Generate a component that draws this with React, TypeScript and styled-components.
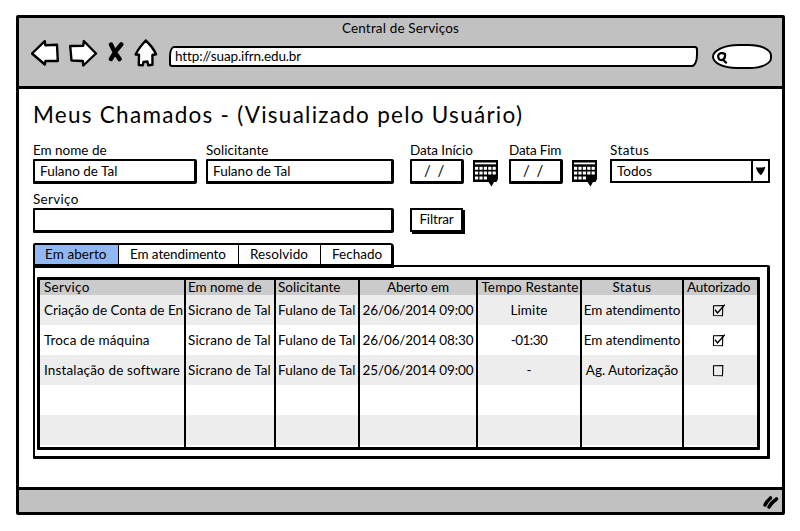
import React from "react";
import styled, { createGlobalStyle } from "styled-components";

const GlobalStyle = createGlobalStyle`
  * { box-sizing: border-box; }
  body { margin: 0; background: #fff; color: #000; font: 13.5px/16px Lato, sans-serif; }
`;

const ink = "#000";

const Text = styled.span<{ $track?: number }>`
  white-space: nowrap;
  letter-spacing: ${(p) => (p.$track ?? 0.1) - 0.05}px;
`;

const Page = styled.main`
  padding: 15px 15px 16px 16px;
  height: 531px;
`;

const BrowserWindow = styled.section`
  display: flex;
  flex-direction: column;
  height: 500px;
  border: 3px solid ${ink};
  border-radius: 2px;
`;

const Chrome = styled.header`
  height: 71px;
  background: #c1c1c1;
  border-bottom: 3px solid ${ink};
`;

const WindowTitle = styled.div`
  height: 20px;
  padding-top: 2px;
  text-align: center;
`;

const Toolbar = styled.div`
  display: flex;
  align-items: center;
  height: 34px;
  padding: 0 10px 0 12px;
`;

const NavIcons = styled.div`
  display: flex;
  gap: 9.5px;
  width: 138px;
  margin-top: -5px;
`;

const AddressBar = styled.div`
  flex: 0 0 529px;
  height: 21px;
  margin-top: 3px;
  padding-left: 4px;
  line-height: 16px;
  background: #fff;
  border: 2px solid ${ink};
  border-radius: 5px 3px 6px 3px / 10px 4px 12px 3px;
`;

const SearchBox = styled.div`
  display: flex;
  align-items: center;
  width: 60px;
  height: 25px;
  margin: 2px 0 0 14px;
  padding: 3px 0 0 2px;
  background: #fff;
  border: 2.5px solid ${ink};
  border-radius: 45% 40% 38% 42% / 52% 46% 44% 50%;
`;

const Content = styled.div`
  flex: 1;
  padding: 0 12px 0 14px;
`;

const Heading = styled.h1`
  margin: 0;
  padding-top: 10px;
  height: 53px;
  font: 400 22.5px/32px Lato, sans-serif;
  letter-spacing: 1.27px;
  white-space: nowrap;
`;

const Filters = styled.div`
  display: grid;
  grid-template-columns: 173px 204px 99px 101px 160px;
  height: 49px;
`;

const Field = styled.div`
  display: flex;
  flex-direction: column;
`;

const Label = styled.label`
  height: 17px;
`;

const Input = styled.div<{ $w: number }>`
  width: ${(p) => p.$w}px;
  height: 25px;
  padding-left: 5px;
  line-height: 20px;
  background: #fff;
  border: solid ${ink};
  border-width: 2px 3px 3px 2px;
  border-radius: 1px 2px 2px 1px;
`;

const DateGroup = styled.div`
  display: flex;
  gap: 9px;
`;

const DateInput = styled(Input)`
  padding-left: 12px;
  line-height: 18px;
  white-space: pre;
  font-size: 15px;
  word-spacing: 3px;
`;

const Select = styled.div`
  display: flex;
  width: 160px;
  height: 24px;
  line-height: 20px;
  border: 2px solid ${ink};
`;

const SelectValue = styled.div`
  flex: 1;
  padding-left: 5px;
`;

const SelectArrow = styled.div`
  display: flex;
  align-items: center;
  justify-content: center;
  width: 17px;
  border-left: 2px solid ${ink};
`;

const ServiceRow = styled.div`
  display: flex;
  align-items: flex-end;
  gap: 16px;
  height: 42px;
`;

const Button = styled.button`
  width: 53px;
  height: 24px;
  margin-bottom: 1px;
  padding: 0 0 2px;
  font: inherit;
  color: inherit;
  background: #fff;
  border: 2px solid ${ink};
  box-shadow: 2px 2px 0 ${ink};
`;

const Tabs = styled.div`
  display: flex;
  width: 361px;
  height: 25px;
  margin-top: 10px;
  border: solid ${ink};
  border-width: 2px 3px 4px 2px;
  border-radius: 2px 4px 0 0;
`;

const Tab = styled.div<{ $w: number; $active?: boolean }>`
  width: ${(p) => p.$w}px;
  padding-left: 10px;
  line-height: 19px;
  background: ${(p) => (p.$active ? "#92b8f1" : "#fff")};
  & + & {
    padding-left: 11px;
    border-left: 1.5px solid ${ink};
  }
`;

const Panel = styled.div`
  height: 194px;
  margin-top: -3px;
  padding: 10px 7px 6px 2px;
  border: solid ${ink};
  border-width: 2px 3px 3px 2px;
  border-radius: 0 2px 1px 1px;
`;

const Table = styled.div`
  height: 173px;
  border: 3px solid ${ink};
  border-radius: 1px;
`;

const columns = "146px 90px 84px 118px 104px 102px 73px";

const Row = styled.div<{ $kind: "head" | "odd" | "even" | "tail" }>`
  display: grid;
  grid-template-columns: ${columns};
  height: ${(p) => (p.$kind === "head" ? 15 : p.$kind === "tail" ? 2 : 30)}px;
  line-height: ${(p) => (p.$kind === "head" ? 15 : 30)}px;
  background: ${(p) => ({ head: "#cbcbcb", odd: "#ededed", even: "#fff", tail: "#fff" })[p.$kind]};
`;

const Cell = styled.div<{ $center?: boolean; $indent?: number }>`
  overflow: hidden;
  display: flex;
  align-items: center;
  justify-content: ${(p) => (p.$center ? "center" : "flex-start")};
  padding-left: ${(p) => p.$indent ?? 0}px;
  border-right: 2px solid ${ink};
  &:last-child {
    border-right: 0;
    padding-right: 4px;
  }
`;

const StatusBar = styled.footer`
  display: flex;
  align-items: center;
  justify-content: flex-end;
  height: 25px;
  padding: 2px 2px 0 0;
  background: #c1c1c1;
  border-top: 3px solid ${ink};
`;

const BackIcon = () => (
  <svg width="28" height="28" viewBox="0 0 28 28">
    <path d="M1 14.5 13.8 2.2 14.3 6.2 26 5.7 26.8 22 14.5 22 13.8 25.5Z" fill="#fff" stroke={ink} strokeWidth="2.4" strokeLinejoin="round" />
  </svg>
);
const ForwardIcon = () => (
  <svg width="29" height="28" viewBox="0 0 29 28">
    <path d="M27 14.5 14.8 2 14.3 6.7 1.2 7 2.5 21.5 13.8 22 14.3 26.5Z" fill="#fff" stroke={ink} strokeWidth="2.4" strokeLinejoin="round" />
  </svg>
);
const StopIcon = () => (
  <svg width="17" height="28" viewBox="0 0 17 28">
    <path d="M4 5.500Q7.500 14 12.500 20M14.200 5.500Q8 12 4 20" fill="none" stroke={ink} strokeWidth="4.5" strokeLinecap="round" />
  </svg>
);
const HomeIcon = () => (
  <svg width="24" height="28" viewBox="0 0 24 28">
    <path d="M11.7 1.5C8.5 5 4 10 1.7 15.5L5 15.8 4.8 26 8.8 26.3 9.5 23 13.4 22.5 14.2 26.3 18.5 25.8 18.4 16 22 15.3C20 10.5 15.5 5 11.7 1.5Z" fill="#fff" stroke={ink} strokeWidth="2.4" strokeLinejoin="round" />
  </svg>
);
const SearchIcon = () => (
  <svg width="12" height="12" viewBox="0 0 12 12">
    <path d="M9 2Q4-.5 2.2 3.5 2 8 5.500 8.200 9.500 7.500 9 2ZM7 7.800 10 10.600" fill="none" stroke={ink} strokeWidth="2.2" strokeLinecap="round" />
  </svg>
);
const CalendarIcon = () => (
  <svg width="25" height="28" viewBox="0 0 25 28">
    <path d="M0 1H25V20L23.500 23H21L18.500 27.500 15.500 23H0Z" fill={ink} />
    <path d="M2 3.500H23V5.300H2Z" fill="#fff" />
    <g fill="#fff">
      {[0, 1, 2, 3, 4].map((c) => (
        <rect key={c} x={2 + c * 4.4} y="7.800" width="3.2" height="3" />
      ))}
      {[0, 1, 2, 3, 4].map((c) => (
        <rect key={c} x={2 + c * 4.4} y="12.500" width="3.2" height="3" />
      ))}
      {[0, 1, 2].map((c) => (
        <rect key={c} x={2 + c * 4.4} y="17.500" width="3.2" height="3" />
      ))}
    </g>
  </svg>
);
const ArrowIcon = () => (
  <svg width="11" height="10" viewBox="0 0 11 10">
    <path d="M1 1.200Q5.500 2.200 10.300.8 10 5 5.800 9.200 1.500 5.500 1 1.200Z" fill={ink} />
  </svg>
);
const CheckIcon = ({ checked }: { checked: boolean }) => (
  <svg width="13" height="13" viewBox="0 0 13 13" fill="none" stroke={ink}>
    <path d="M1.500 1.800 10.800 1.500 10.500 11.800 1.500 11.500Z" strokeWidth="1.1" />
    {checked && <path d="M3 5.800 5.500 9 12.800.6" strokeWidth="1.400" />}
  </svg>
);
const ResizeGrip = () => (
  <svg width="18" height="16" viewBox="0 0 18 16">
    <path d="M3 11Q4.500 7.500 8.500 4M7 13Q9.500 8.500 14.500 5" fill="none" stroke={ink} strokeWidth="3.600" strokeLinecap="round" />
  </svg>
);

interface Ticket {
  service: string;
  serviceTrack: number;
  opened: string;
  remaining: string;
  remainingTrack: number;
  status: string;
  authorized: boolean;
}

const tickets: Ticket[] = [
  { service: "Criação de Conta de En", serviceTrack: 0.08, opened: "26/06/2014 09:00", remaining: "Limite", remainingTrack: 0.17, status: "Em atendimento", authorized: true },
  { service: "Troca de máquina", serviceTrack: 0.16, opened: "26/06/2014 08:30", remaining: "-01:30", remainingTrack: -0.45, status: "Em atendimento", authorized: true },
  { service: "Instalação de software", serviceTrack: 0.2, opened: "25/06/2014 09:00", remaining: "-", remainingTrack: 0, status: "Ag. Autorização", authorized: false },
];

const emptyRows = ["even", "odd", "tail"] as const;

export default function App() {
  return (
    <>
      <GlobalStyle />
      <Page>
        <BrowserWindow>
          <Chrome>
            <WindowTitle><Text $track={0.22}>Central de Serviços</Text></WindowTitle>
            <Toolbar>
              <NavIcons><BackIcon /><ForwardIcon /><StopIcon /><HomeIcon /></NavIcons>
              <AddressBar><Text $track={-0.08}>http://suap.ifrn.edu.br</Text></AddressBar>
              <SearchBox><SearchIcon /></SearchBox>
            </Toolbar>
          </Chrome>
          <Content>
            <Heading>Meus Chamados - (Visualizado pelo Usuário)</Heading>
            <Filters>
              <Field>
                <Label><Text $track={0.03}>Em nome de</Text></Label>
                <Input $w={164}><Text $track={0.06}>Fulano de Tal</Text></Input>
              </Field>
              <Field>
                <Label><Text $track={0.09}>Solicitante</Text></Label>
                <Input $w={188}><Text $track={0.06}>Fulano de Tal</Text></Input>
              </Field>
              <Field>
                <Label><Text $track={-0.02}>Data Início</Text></Label>
                <DateGroup><DateInput $w={54}>/ /</DateInput><CalendarIcon /></DateGroup>
              </Field>
              <Field>
                <Label><Text $track={-0.15}>Data Fim</Text></Label>
                <DateGroup><DateInput $w={54}>/ /</DateInput><CalendarIcon /></DateGroup>
              </Field>
              <Field>
                <Label><Text $track={0.47}>Status</Text></Label>
                <Select>
                  <SelectValue><Text $track={0.05}>Todos</Text></SelectValue>
                  <SelectArrow><ArrowIcon /></SelectArrow>
                </Select>
              </Field>
            </Filters>
            <ServiceRow>
              <Field>
                <Label><Text $track={0.35}>Serviço</Text></Label>
                <Input $w={361} />
              </Field>
              <Button><Text $track={-0.11}>Filtrar</Text></Button>
            </ServiceRow>
            <Tabs>
              <Tab $w={83} $active><Text $track={0.12}>Em aberto</Text></Tab>
              <Tab $w={120}><Text $track={-0.05}>Em atendimento</Text></Tab>
              <Tab $w={82}><Text $track={0.14}>Resolvido</Text></Tab>
              <Tab $w={71}><Text $track={0.06}>Fechado</Text></Tab>
            </Tabs>
            <Panel>
              <Table>
                <Row $kind="head">
                  <Cell $indent={4}><Text $track={0.35}>Serviço</Text></Cell>
                  <Cell $indent={2}><Text $track={0.03}>Em nome de</Text></Cell>
                  <Cell $indent={2}><Text $track={0.09}>Solicitante</Text></Cell>
                  <Cell $center><Text $track={-0.04}>Aberto em</Text></Cell>
                  <Cell $center $indent={2}><Text $track={0.2}>Tempo Restante</Text></Cell>
                  <Cell $center><Text $track={0.47}>Status</Text></Cell>
                  <Cell $indent={3}><Text $track={-0.15}>Autorizado</Text></Cell>
                </Row>
                {tickets.map((t, i) => (
                  <Row key={t.service} $kind={i % 2 ? "even" : "odd"}>
                    <Cell $indent={4}><Text $track={t.serviceTrack}>{t.service}</Text></Cell>
                    <Cell $indent={2}><Text $track={0.17}>Sicrano de Tal</Text></Cell>
                    <Cell $indent={2}><Text $track={0.06}>Fulano de Tal</Text></Cell>
                    <Cell $center><Text $track={-0.09}>{t.opened}</Text></Cell>
                    <Cell $center><Text $track={t.remainingTrack}>{t.remaining}</Text></Cell>
                    <Cell $center><Text $track={0}>{t.status}</Text></Cell>
                    <Cell $center><CheckIcon checked={t.authorized} /></Cell>
                  </Row>
                ))}
                {emptyRows.map((kind) => (
                  <Row key={kind} $kind={kind}>
                    {[0, 1, 2, 3, 4, 5, 6].map((c) => <Cell key={c} />)}
                  </Row>
                ))}
              </Table>
            </Panel>
          </Content>
          <StatusBar><ResizeGrip /></StatusBar>
        </BrowserWindow>
      </Page>
    </>
  );
}
